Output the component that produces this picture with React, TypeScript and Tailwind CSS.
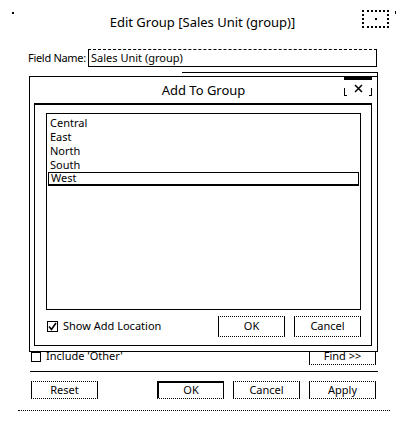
import React from "react";

const font = { fontFamily: '"Noto Sans", "Liberation Sans", sans-serif' };

function Btn({ label, bold = false, w = "w-[67px]", h = "h-[18px]" }: { label: string; bold?: boolean; w?: string; h?: string }) {
  return (
    <div
      className={`${w} ${h} flex items-center justify-center bg-white text-[11px] text-black whitespace-nowrap border-black ${
        bold ? "border-t-2 border-l-2 border-r border-b border-b-dotted" : "border border-t-dotted"
      }`}
      style={bold ? { borderBottomStyle: "dotted" } : { borderTopStyle: "dotted", borderBottomStyle: "dotted" }}
    >
      {label}
    </div>
  );
}

export default function App() {
  const items = ["Central", "East", "North", "South", "West"];
  return (
    <div className="relative w-[401px] h-[429px] bg-white text-black overflow-hidden" style={font}>
      {/* corner specks */}
      <div className="absolute left-[12px] top-[12px] w-[2px] h-[2px] bg-black" />
      <div className="absolute left-[395px] top-[11px] w-[1px] h-[3px] bg-black" />

      {/* header */}
      <div className="grid grid-cols-[1fr_auto_1fr] items-start h-[49px]">
        <div />
        <div className="pt-[13px] text-[13px] leading-[18px] pl-[4px] whitespace-nowrap">Edit Group [Sales Unit (group)]</div>
        <div className="flex justify-end pr-[12px] pt-[10px]">
          <div className="w-[27px] h-[18px] border-2 border-dotted border-black flex items-center justify-center">
            <div className="w-[2px] h-[2px] bg-black" />
          </div>
        </div>
      </div>

      {/* field name row */}
      <div className="flex items-center h-[18px] pl-[28px]">
        <span className="w-[60px] text-[11px] whitespace-nowrap tracking-[-0.3px]">Field Name:</span>
        <div
          className="w-[289px] h-[18px] border border-black flex items-center pl-[2px] text-[11px]"
          style={{ borderTopStyle: "dashed" }}
        >
          Sales Unit (group)
        </div>
      </div>

      {/* field list panel behind */}
      <div className="mt-[5px] ml-[182px] mr-[23px] h-[276px] border-t border-r border-black" />

      {/* include other row */}
      <div className="flex items-center justify-between h-[17px] pl-[31px] pr-[25px]">
        <div className="flex items-center gap-[5px]">
          <div className="w-[10px] h-[10px] border border-black" />
          <span className="text-[11px]">Include 'Other'</span>
        </div>
        <Btn label="Find >>" h="h-[17px]" />
      </div>

      {/* separator */}
      <div className="mt-[6px] ml-[30px] mr-[23px] border-t border-black" />

      {/* buttons */}
      <div className="mt-[9px] flex items-center pl-[31px] pr-[25px]">
        <Btn label="Reset" />
        <div className="flex-1" />
        <div className="flex gap-[9px]">
          <Btn label="OK" bold />
          <Btn label="Cancel" />
          <Btn label="Apply" />
        </div>
      </div>

      {/* dotted line */}
      <div className="mt-[11px] ml-[18px] mr-[11px] border-t border-dotted border-black" />

      {/* overlay dialog */}
      <div className="absolute left-[29px] top-[76px] w-[349px] h-[276px] bg-white border border-black flex flex-col">
        <div className="relative h-[26px] flex items-center justify-center">
          <span className="text-[13px] leading-none">Add To Group</span>
          <div className="absolute right-[5px] top-[0px] w-[28px] h-[19px] border-t-[3px] border-black flex items-center justify-center">
            <div className="absolute left-0 bottom-0 w-[3px] h-[8px] border-l border-b border-black" />
            <div className="absolute right-0 bottom-0 w-[3px] h-[8px] border-r border-b border-black" />
            <svg width="9" height="9" viewBox="0 0 9 9">
              <path d="M1 1L8 8M8 1L1 8" stroke="black" strokeWidth="1.5" />
            </svg>
          </div>
        </div>
        <div className="ml-[4px] mr-[5px] mb-[5px] flex-1 border border-black border-t-2 flex flex-col pl-[11px] pr-[10px] pt-[8px]">
          <div className="h-[197px] border border-black pt-[2px] pl-[1px] pr-[1px]">
            {items.map((it) => (
              <div
                key={it}
                className={`h-[14px] flex items-center pl-[2px] text-[11px] ${it === "West" ? "border border-black border-b-2" : ""}`}
              >
                {it}
              </div>
            ))}
          </div>
          <div className="mt-[6px] flex items-center">
            <div className="flex items-center gap-[5px] pl-[1px]">
              <div className="w-[11px] h-[11px] border border-black flex items-center justify-center">
                <svg width="9" height="9" viewBox="0 0 9 9">
                  <path d="M1 4.5L3.5 7.5L8 1" stroke="black" strokeWidth="1.6" fill="none" />
                </svg>
              </div>
              <span className="text-[11px]">Show Add Location</span>
            </div>
            <div className="flex-1" />
            <div className="flex gap-[9px]">
              <Btn label="OK" h="h-[21px]" />
              <Btn label="Cancel" h="h-[21px]" />
            </div>
          </div>
        </div>
      </div>
    </div>
  );
}
